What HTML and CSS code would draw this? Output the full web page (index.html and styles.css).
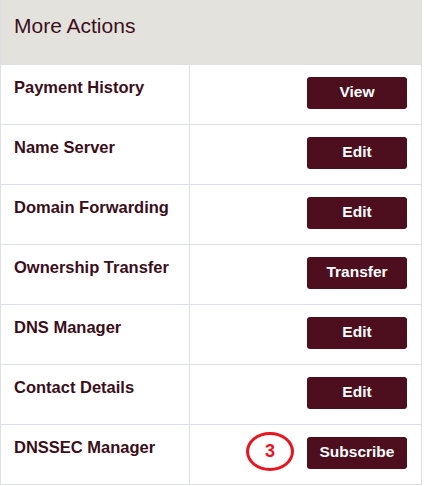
FILE: index.html
```html
<!DOCTYPE html>
<html>
<head>
<meta charset="utf-8">
<link rel="stylesheet" href="styles.css">
</head>
<body>
<div class="panel">
  <div class="panel-head">More Actions</div>
  <div class="row">
    <div class="label">Payment History</div>
    <div class="action"><button class="btn">View</button></div>
  </div>
  <div class="row">
    <div class="label">Name Server</div>
    <div class="action"><button class="btn">Edit</button></div>
  </div>
  <div class="row">
    <div class="label">Domain Forwarding</div>
    <div class="action"><button class="btn">Edit</button></div>
  </div>
  <div class="row">
    <div class="label">Ownership Transfer</div>
    <div class="action"><button class="btn">Transfer</button></div>
  </div>
  <div class="row">
    <div class="label">DNS Manager</div>
    <div class="action"><button class="btn">Edit</button></div>
  </div>
  <div class="row">
    <div class="label">Contact Details</div>
    <div class="action"><button class="btn">Edit</button></div>
  </div>
  <div class="row last">
    <div class="label">DNSSEC Manager</div>
    <div class="action">
      <span class="marker">3</span>
      <button class="btn">Subscribe</button>
    </div>
  </div>
</div>
</body>
</html>
```
FILE: styles.css
```css
html, body {
  margin: 0;
  padding: 0;
  background: #ffffff;
}
body {
  font-family: "Liberation Sans", Arial, sans-serif;
}
.panel {
  width: 420px;
  border: 1px solid #dcdfe5;
  border-top: none;
}
.panel-head {
  height: 64px;
  box-sizing: border-box;
  background: #e3e2dc;
  color: #3d0f1c;
  font-size: 21px;
  padding: 14px 0 0 13px;
  line-height: 24px;
}
.row {
  display: grid;
  grid-template-columns: 189px 1fr;
  height: 60px;
  box-sizing: border-box;
  border-top: 1px solid #dcdfe5;
}
.label {
  border-right: 1px solid #dcdfe5;
  padding: 11px 0 0 13px;
  font-weight: bold;
  font-size: 16.5px;
  line-height: 22px;
  color: #3a0f1b;
}
.action {
  position: relative;
  display: flex;
  justify-content: flex-end;
  align-items: flex-start;
  padding: 12px 14px 0 0;
}
.btn {
  width: 100px;
  height: 32px;
  border: none;
  border-radius: 3px;
  background: #4d0f1e;
  color: #ffffff;
  font-family: "Liberation Sans", Arial, sans-serif;
  font-weight: bold;
  font-size: 15.5px;
  padding: 0;
  padding-bottom: 3px;
}
.marker {
  position: absolute;
  left: 56px;
  top: 7px;
  width: 48px;
  height: 39px;
  box-sizing: border-box;
  border: 3px solid #e8141e;
  border-radius: 50%;
  color: #e8141e;
  font-weight: bold;
  font-size: 18px;
  display: flex;
  align-items: center;
  justify-content: center;
}
```
